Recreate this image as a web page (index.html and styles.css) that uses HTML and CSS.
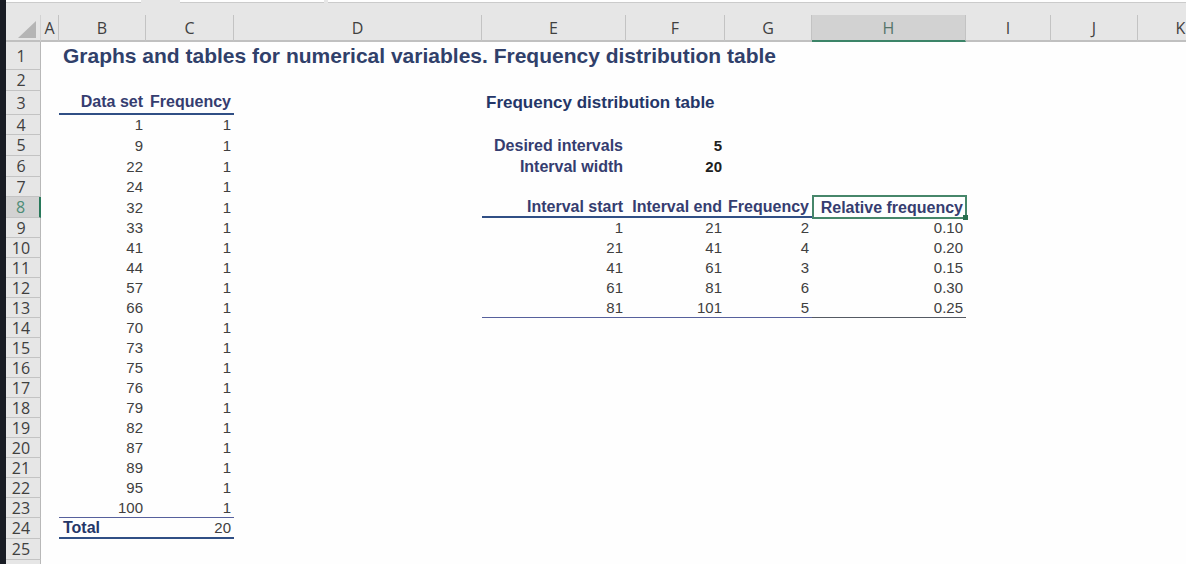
FILE: index.html
```
<!DOCTYPE html>
<html lang="en">
<head>
<meta charset="utf-8">
<title>Frequency distribution table</title>
<link rel="stylesheet" href="styles.css">
</head>
<body>
<div class="app">
<div class="formula-bar">
<input class="name-box" type="text" aria-label="Name box">
<div class="formula-tools"></div>
<input class="formula-input" type="text" aria-label="Formula">
</div>
<table class="sheet">
<colgroup><col class="w-head"><col class="w-a"><col class="w-b"><col class="w-c"><col class="w-d"><col class="w-e"><col class="w-f"><col class="w-g"><col class="w-h"><col class="w-i"><col class="w-j"><col class="w-k"></colgroup>
<thead>
<tr><th class="corner"><svg width="18" height="17" viewBox="0 0 18 17" aria-hidden="true"><path d="M18 0V17H0Z" fill="#b5b5b5"/></svg></th><th>A</th><th>B</th><th>C</th><th>D</th><th>E</th><th>F</th><th>G</th><th class="active">H</th><th>I</th><th>J</th><th>K</th></tr>
</thead>
<tbody>
<tr class="r-title"><th>1</th><td></td><td class="title" colspan="10">Graphs and tables for numerical variables. Frequency distribution table</td></tr>
<tr class="r-mid"><th>2</th><td colspan="11"></td></tr>
<tr class="r-tall"><th>3</th><td></td><td class="label rule">Data set</td><td class="label rule">Frequency</td><td></td><td class="subtitle" colspan="7">Frequency distribution table</td></tr>
<tr><th>4</th><td></td><td>1</td><td>1</td><td colspan="8"></td></tr>
<tr class="r-mid"><th>5</th><td></td><td>9</td><td>1</td><td></td><td class="label">Desired intervals</td><td class="strong">5</td><td colspan="5"></td></tr>
<tr class="r-mid"><th>6</th><td></td><td>22</td><td>1</td><td></td><td class="label">Interval width</td><td class="strong">20</td><td colspan="5"></td></tr>
<tr><th>7</th><td></td><td>24</td><td>1</td><td colspan="8"></td></tr>
<tr class="r-mid"><th class="active">8</th><td></td><td>32</td><td>1</td><td></td><td class="label rule">Interval start</td><td class="label rule">Interval end</td><td class="label rule">Frequency</td><td class="label selected">Relative frequency</td><td colspan="3"></td></tr>
<tr><th>9</th><td></td><td>33</td><td>1</td><td></td><td>1</td><td>21</td><td>2</td><td>0.10</td><td colspan="3"></td></tr>
<tr><th>10</th><td></td><td>41</td><td>1</td><td></td><td>21</td><td>41</td><td>4</td><td>0.20</td><td colspan="3"></td></tr>
<tr><th>11</th><td></td><td>44</td><td>1</td><td></td><td>41</td><td>61</td><td>3</td><td>0.15</td><td colspan="3"></td></tr>
<tr><th>12</th><td></td><td>57</td><td>1</td><td></td><td>61</td><td>81</td><td>6</td><td>0.30</td><td colspan="3"></td></tr>
<tr><th>13</th><td></td><td>66</td><td>1</td><td></td><td class="thin">81</td><td class="thin">101</td><td class="thin">5</td><td class="thin gray">0.25</td><td colspan="3"></td></tr>
<tr><th>14</th><td></td><td>70</td><td>1</td><td colspan="8"></td></tr>
<tr><th>15</th><td></td><td>73</td><td>1</td><td colspan="8"></td></tr>
<tr><th>16</th><td></td><td>75</td><td>1</td><td colspan="8"></td></tr>
<tr><th>17</th><td></td><td>76</td><td>1</td><td colspan="8"></td></tr>
<tr><th>18</th><td></td><td>79</td><td>1</td><td colspan="8"></td></tr>
<tr><th>19</th><td></td><td>82</td><td>1</td><td colspan="8"></td></tr>
<tr><th>20</th><td></td><td>87</td><td>1</td><td colspan="8"></td></tr>
<tr><th>21</th><td></td><td>89</td><td>1</td><td colspan="8"></td></tr>
<tr><th>22</th><td></td><td>95</td><td>1</td><td colspan="8"></td></tr>
<tr><th>23</th><td></td><td class="thin">100</td><td class="thin">1</td><td colspan="8"></td></tr>
<tr class="r-mid"><th>24</th><td></td><td class="total rule">Total</td><td class="rule">20</td><td colspan="8"></td></tr>
<tr class="r-mid"><th>25</th><td colspan="11"></td></tr>
<tr><th>26</th><td colspan="11"></td></tr>
</tbody>
</table>
</div>
</body>
</html>
```
FILE: styles.css
```
* { box-sizing: border-box; }

body {
  margin: 0;
  background: #fefefe;
  font-family: "Liberation Sans", Arial, sans-serif;
}

.app {
  height: 100vh;
  overflow: hidden;
  border-left: 6px solid #191c24;
}

.formula-bar {
  display: flex;
  height: 15px;
  background: #e6e6e6;
}

.formula-bar input,
.formula-tools {
  height: 3px;
  padding: 0;
  border: 0;
  border-bottom: 1px solid #cbcbcb;
  border-radius: 0;
  background: #fefefe;
}

.formula-bar .name-box { width: 135px; }
.formula-tools { width: 144px; margin: 0 4px 0 39px; }
.formula-bar .formula-input { flex: 1; }

.sheet {
  width: 1218px;
  table-layout: fixed;
  border-collapse: separate;
  border-spacing: 0;
  font-size: 15px;
  line-height: 18px;
}

.w-head { width: 35px; }
.w-a { width: 18px; }
.w-b { width: 87px; }
.w-c { width: 88px; }
.w-d { width: 248px; }
.w-e { width: 144px; }
.w-f { width: 99px; }
.w-g { width: 87px; }
.w-h { width: 154px; }
.w-i { width: 85px; }
.w-j { width: 87px; }
.w-k { width: 86px; }

th {
  padding: 0;
  background: #e6e6e6;
  color: #404040;
  font-family: "Open Sans", "Noto Sans", sans-serif;
  font-size: 16px;
  font-weight: 400;
}

thead th {
  height: 27px;
  border-right: 1px solid #c3c3c3;
  border-bottom: 2px solid #c0c0c0;
}

thead .corner {
  padding: 4px 4px 0 0;
  text-align: right;
  border-right-color: #d2d2d2;
}

.corner svg { display: block; margin-left: auto; }

thead .active {
  background: #d2d2d2;
  border-bottom-color: #3c8468;
  color: #55756a;
}

tbody tr { height: 20px; }
tbody .r-mid { height: 21px; }
tbody .r-tall { height: 24px; }
tbody .r-title { height: 28px; }

tbody th {
  padding-right: 4px;
  border-right: 1px solid #b8b8b8;
  border-bottom: 1px solid #c3c3c3;
}

tbody .active {
  background: #d2d2d2;
  border-right: 2px solid #28785a;
  color: #4d8c76;
}

td {
  padding: 0 3px 0 0;
  color: #404040;
  text-align: right;
  white-space: nowrap;
}

.label, .title, .subtitle, .total { color: #353d70; font-weight: 700; }
.label, .total { font-size: 16px; }
.title, .subtitle, .total { padding-left: 4px; text-align: left; }
.title { color: #30406a; font-size: 21px; }
.subtitle { color: #243668; font-size: 17px; }
.total { color: #243668; }
.strong { color: #202020; font-weight: 700; }

.rule { border-bottom: 2px solid #304f85; }
.thin { border-bottom: 1px solid #56609c; }
.gray { border-bottom-color: #555a63; }

.selected { position: relative; }

.selected::before {
  content: "";
  position: absolute;
  inset: -2px -1px -1px 0;
  border: 2px solid #46866a;
}

.selected::after {
  content: "";
  position: absolute;
  right: -2px;
  bottom: -2px;
  width: 5px;
  height: 5px;
  background: #28704f;
}
```
